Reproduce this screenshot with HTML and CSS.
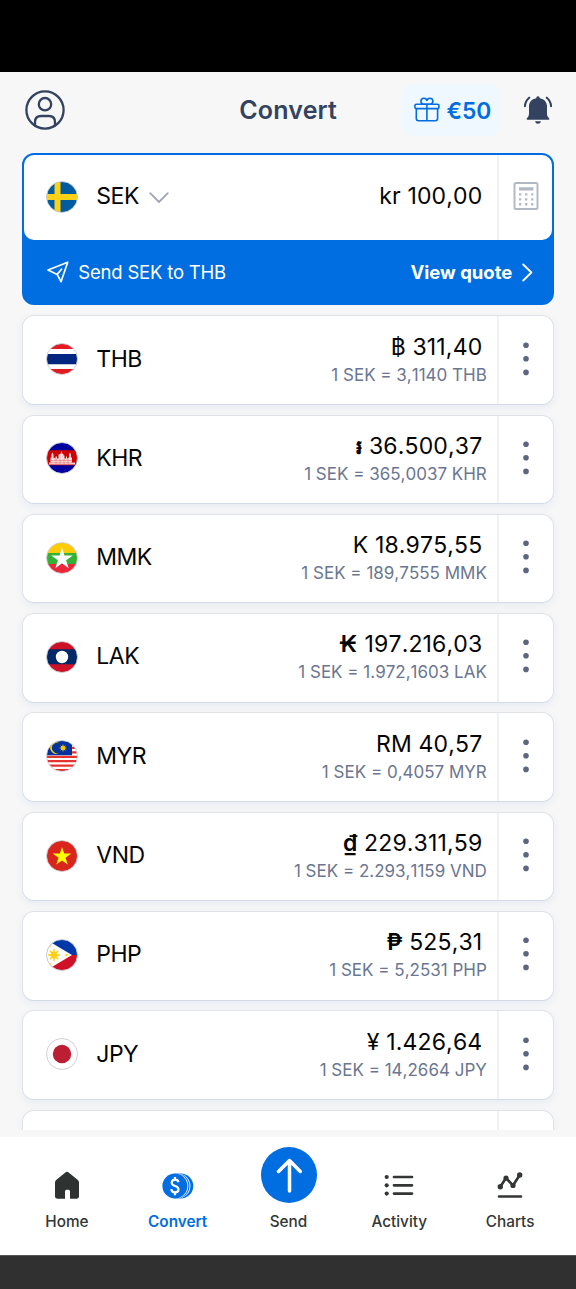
FILE: index.html
```html
<!DOCTYPE html>
<html lang="en">
<head>
<meta charset="utf-8">
<title>Convert</title>
<link rel="stylesheet" href="styles.css">
</head>
<body>
<svg class="defs" width="0" height="0" aria-hidden="true">
  <defs>
    <clipPath id="round"><circle cx="16" cy="16" r="15.3"/></clipPath>
    <symbol id="dots" viewBox="0 0 8 34"><circle cx="4" cy="3.2" r="2.8"/><circle cx="4" cy="16.8" r="2.8"/><circle cx="4" cy="30.4" r="2.8"/></symbol>
  </defs>
</svg>
<div class="status-bar"></div>
<header class="header">
  <svg class="profile" width="40" height="40" viewBox="0 0 40 40" fill="none" stroke="#33435f" stroke-width="2.3"><circle cx="20" cy="20" r="18.6"/><circle cx="20" cy="14.2" r="6.2"/><path d="M10 35.4v-3.2q0-6.2 6.2-6.2h7.6q6.2 0 6.2 6.2v3.2"/></svg>
  <h1 class="title">Convert</h1>
  <div class="reward">
    <svg width="26" height="26" viewBox="0 0 26 26" fill="none" stroke="#006ee0" stroke-width="1.6"><rect x=".9" y="7.2" width="24" height="4.4" rx="1.4"/><path d="M2.3 11.6v10q0 2.2 2.2 2.2h16.9q2.2 0 2.2-2.2v-10M12.9 7.2v16.6M12.9 7.2H9.2a3 3 0 1 1 3.7-3.3a3 3 0 1 1 3.7 3.3z"/></svg>
    <span>€50</span>
  </div>
  <svg class="bell" width="28" height="28" viewBox="0 0 28 28" fill="#33435f"><path d="M12.200 2.300Q12.200.3 14 .3t1.800 2c4.600.7 7.200 4 7.200 8v7.300c0 2 .5 3 1.900 4.400.8.7.7 1.800-.5 1.800H3.600c-1.200 0-1.300-1.100-.5-1.800 1.400-1.400 1.900-2.400 1.900-4.400v-7.300c0-4 2.600-7.300 7.200-8z"/><path d="M11 25.300h6q-.6 2.500-3 2.500t-3-2.500z"/><path d="M5.200 1.700Q1.400 4.800.9 10.200M22.800 1.700q3.800 3.100 4.300 8.500" fill="none" stroke="#33435f" stroke-width="2.100" stroke-linecap="round"/></svg>
</header>
<main class="list">
  <section class="source">
    <div class="source-row">
      <svg class="flag" viewBox="0 0 32 32"><g clip-path="url(#round)"><path fill="#005b9f" d="M0 0h32v32H0z"/><path fill="#fdd116" d="M8.500 0h6v32h-6zM0 13h32v6H0z"/></g><circle class="rim" cx="16" cy="16" r="15.500"/></svg>
      <span class="code">SEK</span>
      <svg class="chevron" width="20" height="12" viewBox="0 0 20 12" fill="none" stroke="#a0a6b5" stroke-width="1.800" stroke-linecap="round" stroke-linejoin="round"><path d="M1.200 1.200 10 10l8.800-8.800"/></svg>
      <span class="amount source-amount">kr 100,00</span>
      <div class="action">
        <svg class="calc" width="26" height="30" viewBox="0 0 26 30" fill="none" stroke="#b3b8c5"><rect x="1.500" y="1.900" width="23" height="26.200" rx="1.500" stroke-width="2"/><path d="M6 7.800h14.400" stroke-width="3.200"/><path d="M6 13.400h14.300M6 18.400h14.300M6 23.300h14.300" stroke-width="2.400" stroke-dasharray="2.300 3.750"/></svg>
      </div>
    </div>
    <div class="quote">
      <svg width="22" height="22" viewBox="0 0 22 22" fill="none" stroke="#fff" stroke-width="1.700" stroke-linejoin="round" stroke-linecap="round"><path d="M1 9 20.700 1.200 14 20.700 10.200 13.400zM10.200 13.400l4.300-5.200"/></svg>
      <span class="quote-text">Send SEK to THB</span>
      <span class="quote-link">View quote</span>
      <svg class="next" width="11" height="19" viewBox="0 0 11 19" fill="none" stroke="#fff" stroke-width="1.800" stroke-linecap="round" stroke-linejoin="round"><path d="M1.200 1.500 9.400 9.500 1.200 17.500"/></svg>
    </div>
  </section>

  <article class="card">
    <svg class="flag" viewBox="0 0 32 32"><g clip-path="url(#round)"><path fill="#fff" d="M0 0h32v32H0z"/><path fill="#e31b23" d="M0 0h32v6H0zM0 26h32v6H0z"/><path fill="#00267f" d="M0 11h32v10.300H0z"/></g><circle class="rim" cx="16" cy="16" r="15.500"/></svg>
    <span class="code">THB</span>
    <div class="values"><span class="amount">฿ 311,40</span><span class="rate">1 SEK = 3,1140 THB</span></div>
    <div class="action"><svg class="dots"><use href="#dots"/></svg></div>
  </article>
  <article class="card">
    <svg class="flag" viewBox="0 0 32 32"><g clip-path="url(#round)"><path fill="#00009f" d="M0 0h32v32H0z"/><path fill="#d00000" d="M0 8.300h32v15H0z"/><path fill="#fff" opacity=".85" d="M3 22.500v-2h1.500v-5h1v-3l1-2 1 2v3l2 1v-2h1.500v2h1.500v-4h1V12h1l1-3 1 3h1v1.500h1v3h1.500v-2H21v2l2-1v-3l1-2 1 2v3h1v5h3v2z"/><path stroke="#d00000" stroke-width=".4" opacity=".7" d="M5 18.500h22M4 20.800h24M10 16v6m4-5v5m4-5v5m4-6v6"/></g><circle class="rim" cx="16" cy="16" r="15.500"/></svg>
    <span class="code">KHR</span>
    <div class="values"><span class="amount"><span class="riel">៛</span> 36.500,37</span><span class="rate">1 SEK = 365,0037 KHR</span></div>
    <div class="action"><svg class="dots"><use href="#dots"/></svg></div>
  </article>
  <article class="card">
    <svg class="flag" viewBox="0 0 32 32"><g clip-path="url(#round)"><path fill="#fecb00" d="M0 0h32v11H0z"/><path fill="#34b233" d="M0 11h32v11H0z"/><path fill="#ea2839" d="M0 22h32v10H0z"/><path fill="#fff" d="m16 5.500 2.500 7.900h8.300L20.100 18.200l2.600 8L16 21.300l-6.700 4.900 2.600-8-6.700-4.800h8.300z"/></g><circle class="rim" cx="16" cy="16" r="15.500"/></svg>
    <span class="code">MMK</span>
    <div class="values"><span class="amount">K 18.975,55</span><span class="rate">1 SEK = 189,7555 MMK</span></div>
    <div class="action"><svg class="dots"><use href="#dots"/></svg></div>
  </article>
  <article class="card">
    <svg class="flag" viewBox="0 0 32 32"><g clip-path="url(#round)"><path fill="#ce1126" d="M0 0h32v32H0z"/><path fill="#002868" d="M0 8.300h32v15H0z"/><circle cx="16" cy="16" r="6.200" fill="#fff"/></g><circle class="rim" cx="16" cy="16" r="15.500"/></svg>
    <span class="code">LAK</span>
    <div class="values"><span class="amount"><span class="symbol kip">₭</span> 197.216,03</span><span class="rate">1 SEK = 1.972,1603 LAK</span></div>
    <div class="action"><svg class="dots"><use href="#dots"/></svg></div>
  </article>
  <article class="card">
    <svg class="flag" viewBox="0 0 32 32"><g clip-path="url(#round)"><path fill="#fff" d="M0 0h32v32H0z"/><path stroke="#e6332e" stroke-width="2.200" d="M0 7.800h32M0 12.300h32M0 16.800h32M0 21.200h32M0 25.600h32M0 30h32"/><path fill="#0032a0" d="M0 0h26v15.300H0z"/><path fill="#ffcc00" d="M13 3.200a5.200 5.200 0 1 0 0 9.600 5.700 5.700 0 1 1 0-9.600z"/><circle cx="17" cy="8" r="2.100" fill="#ffcc00"/><path stroke="#ffcc00" d="M17 4.700v6.600M13.700 8h6.600M14.700 5.700l4.600 4.600M19.300 5.700l-4.600 4.600"/></g><circle class="rim" cx="16" cy="16" r="15.500"/></svg>
    <span class="code">MYR</span>
    <div class="values"><span class="amount">RM 40,57</span><span class="rate">1 SEK = 0,4057 MYR</span></div>
    <div class="action"><svg class="dots"><use href="#dots"/></svg></div>
  </article>
  <article class="card">
    <svg class="flag" viewBox="0 0 32 32"><g clip-path="url(#round)"><path fill="#da251d" d="M0 0h32v32H0z"/><path fill="#ff0" d="m16 7 2.200 6.600h7l-5.700 4.200 2.200 6.800L16 20.500l-5.700 4.100 2.200-6.800-5.700-4.200h7z"/></g><circle class="rim" cx="16" cy="16" r="15.500"/></svg>
    <span class="code">VND</span>
    <div class="values"><span class="amount"><span class="symbol">₫</span> 229.311,59</span><span class="rate">1 SEK = 2.293,1159 VND</span></div>
    <div class="action"><svg class="dots"><use href="#dots"/></svg></div>
  </article>
  <article class="card">
    <svg class="flag" viewBox="0 0 32 32"><g clip-path="url(#round)"><path fill="#0038a8" d="M0 0h32v16H0z"/><path fill="#ce1126" d="M0 16h32v16H0z"/><path fill="#fff" d="M-1 0 26 16-1 32z"/><circle cx="8" cy="16" r="3.500" fill="#fcd116"/><path stroke="#fcd116" stroke-width="1.500" d="M8 10v12M2 16h12M3.800 11.800l8.400 8.400M12.200 11.800l-8.400 8.400"/><circle cx="20.500" cy="16" r="1.200" fill="#fcd116"/><circle cx="4.500" cy="7" r=".8" fill="#fcd116"/><circle cx="4.500" cy="25" r=".8" fill="#fcd116"/></g><circle class="rim" cx="16" cy="16" r="15.500"/></svg>
    <span class="code">PHP</span>
    <div class="values"><span class="amount"><span class="symbol peso">₱</span> 525,31</span><span class="rate">1 SEK = 5,2531 PHP</span></div>
    <div class="action"><svg class="dots"><use href="#dots"/></svg></div>
  </article>
  <article class="card">
    <svg class="flag" viewBox="0 0 32 32"><circle cx="16" cy="16" r="15.300" fill="#fff"/><circle cx="16" cy="16" r="9.200" fill="#bc1e34"/><circle class="rim" cx="16" cy="16" r="15.500"/></svg>
    <span class="code">JPY</span>
    <div class="values"><span class="amount">¥ 1.426,64</span><span class="rate">1 SEK = 14,2664 JPY</span></div>
    <div class="action"><svg class="dots"><use href="#dots"/></svg></div>
  </article>
  <article class="card"><div class="values"></div><div class="action"></div></article>
</main>
<nav class="nav">
  <a class="tab"><svg width="26" height="28" viewBox="0 0 26 28" fill="#2e3331"><path d="M11.400 1.600q1.600-1.500 3.200 0l9 7.200q1.400 1.100 1.400 2.800v14q0 2.100-2.100 2.100H16v-7q0-2-1.500-2h-2q-1.500 0-1.500 2v7H3.100Q1 27.700 1 25.600v-14q0-1.700 1.400-2.800z"/></svg><span>Home</span></a>
  <a class="tab active"><svg width="32" height="28" viewBox="0 0 32 28"><circle cx="18.800" cy="15" r="12.500" fill="#006ee0"/><circle cx="15.900" cy="15" r="12.500" fill="#fff"/><circle cx="15" cy="15" r="12.500" fill="#006ee0"/><circle cx="13.800" cy="15" r="12.500" fill="#fff"/><circle cx="12.900" cy="15" r="12.500" fill="#006ee0"/><path d="M16.500 11.200Q16 8.700 13 8.700t-3.300 3c0 4.200 6.800 2.500 6.800 6.500 0 2-1.300 3.200-3.500 3.200S9.500 20.200 9.300 18.200M13 6V8.700m0 12.500v3" fill="none" stroke="#fff" stroke-width="2.200"/></svg><span>Convert</span></a>
  <a class="tab send"><svg width="56" height="56" viewBox="0 0 56 56" fill="none" stroke="#fff" stroke-width="3.500" stroke-linecap="round" stroke-linejoin="round"><circle cx="28" cy="28" r="28" fill="#006ee0" stroke="none"/><path d="M28.500 44V13.500M17.500 24.500l11-11 10.800 11"/></svg><span>Send</span></a>
  <a class="tab"><svg width="30" height="28" viewBox="0 0 30 28" stroke="#333635" stroke-width="2.700" stroke-linecap="round"><path d="M10 6h18M10 14.300h18M10 22.600h18"/><g fill="#333635" stroke="none"><circle cx="2.700" cy="6" r="2.100"/><circle cx="2.700" cy="14.300" r="2.100"/><circle cx="2.700" cy="22.600" r="2.100"/></g></svg><span>Activity</span></a>
  <a class="tab"><svg width="26" height="28" viewBox="0 0 26 28" stroke="#333635" stroke-width="2.600" stroke-linecap="round" stroke-linejoin="round" fill="none"><path d="M2 25.500h22M3.300 15.800 9 7l7 7.500L22.700 4"/><g fill="#333635" stroke="none"><circle cx="3.300" cy="15.800" r="2.700"/><circle cx="9" cy="7" r="2.600"/><circle cx="16" cy="14.500" r="2.600"/><circle cx="22.700" cy="4" r="2.700"/></g></svg><span>Charts</span></a>
</nav>
<div class="system-bar"></div>
</body>
</html>
```
FILE: styles.css
```css
* { box-sizing: border-box; }

body {
  margin: 0;
  height: 1289px;
  display: flex;
  flex-direction: column;
  overflow: hidden;
  background: #f7f7f7;
  color: #050505;
  font-family: Inter, "Noto Sans", "DejaVu Sans", sans-serif;
}

svg { display: block; flex: none; }
.defs { position: absolute; }
.status-bar { height: 72px; flex: none; background: #000; }

.header {
  height: 81px;
  flex: none;
  display: grid;
  grid-template-columns: 214.500px auto 1fr auto auto;
  align-items: center;
  padding: 0 24.500px 5px 24.800px;
}
.title { margin: 0; font-size: 25px; line-height: 30px; font-weight: 600; letter-spacing: .15px; color: #33435f; }
.reward {
  grid-column: 4;
  width: 98px;
  height: 52px;
  margin-right: 24px;
  padding-left: 12px;
  display: flex;
  align-items: center;
  gap: 7px;
  border-radius: 12px;
  background: #eff7ff;
  color: #006ee0;
  font-size: 22.800px;
  font-weight: 600;
}

.list {
  height: 977px;
  flex: none;
  padding: 0 21.700px 0 22.300px;
  overflow: hidden;
}

.source {
  height: 151.500px;
  border-radius: 12px;
  border: 2px solid #006ee0;
  background: #006ee0;
  margin-bottom: 10.800px;
}
.source-row {
  height: 85px;
  display: flex;
  align-items: center;
  padding-left: 22px;
  border-radius: 10px;
  background: #fff;
  overflow: hidden;
}
.quote {
  height: 62px;
  display: flex;
  align-items: center;
  padding: 2px 19px 0 23px;
  color: #fff;
  font-size: 18.500px;
}
.quote-text { margin-left: 9px; letter-spacing: -.2px; }
.quote-link { margin-left: auto; font-weight: 700; }
.next { margin-left: 10px; }

.card {
  height: 89.500px;
  margin-bottom: 9.800px;
  display: flex;
  align-items: center;
  padding-left: 23px;
  border: 1px solid #dfe2e6;
  border-bottom-color: #d3dce6;
  border-radius: 12px;
  background: #fff;
  box-shadow: 0 3px 8px rgba(0, 80, 200, .07);
}
.flag { width: 32px; height: 32px; margin-top: -2px; }
.card .flag { margin-top: -2px; }
.rim { fill: none; stroke: #c9ccd1; stroke-width: .9; }
.code { margin-left: 18px; font-size: 23px; line-height: 28px; letter-spacing: -.5px; margin-top: -3px; }
.source .code { margin-top: -4px; }
.chevron { margin-left: 10px; }
.values {
  margin-left: auto;
  padding-top: 1px;
  display: flex;
  flex-direction: column;
  align-items: flex-end;
}
.amount {
  height: 28px;
  font-size: 23px;
  line-height: 28px;
  letter-spacing: .15px;
  font-kerning: none;
  font-feature-settings: "calt" 0;
  margin-right: 15px;
  white-space: nowrap;
}
.source-amount { margin: -4px 15px 0 auto; }
.rate {
  font-size: 17px;
  line-height: 28px;
  font-kerning: none;
  margin-right: 10.500px;
  color: #6b7690;
  white-space: nowrap;
}
.symbol { font-weight: 600; }
.kip { letter-spacing: 1px; }
.riel { font-size: 20px; font-weight: 700; line-height: 1; }
.action {
  width: 56px;
  align-self: stretch;
  display: flex;
  align-items: center;
  justify-content: center;
  border-left: 2px solid #eff1f3;
}
.source .action { width: 55px; }
.calc { margin-top: -3px; }
.dots { width: 8px; height: 34px; fill: #5b6680; margin-top: -3px; }

.nav {
  height: 118px;
  flex: none;
  margin-top: auto;
  padding: 0 10.500px 0 11.500px;
  display: grid;
  grid-template-columns: repeat(5, 1fr);
  background: #fff;
  color: #333635;
  font-size: 15.300px;
  font-weight: 500;
}
.tab {
  display: flex;
  flex-direction: column;
  align-items: center;
  justify-content: space-between;
  padding: 34px 0 23px;
}
.tab span { line-height: 20px; }
.tab.send { padding-top: 10px; }
.tab.send svg { margin-left: 1px; }
.active { color: #006ee0; font-weight: 600; }
.system-bar { height: 34px; flex: none; background: #303030; border-top: 1px solid #555; }
```
